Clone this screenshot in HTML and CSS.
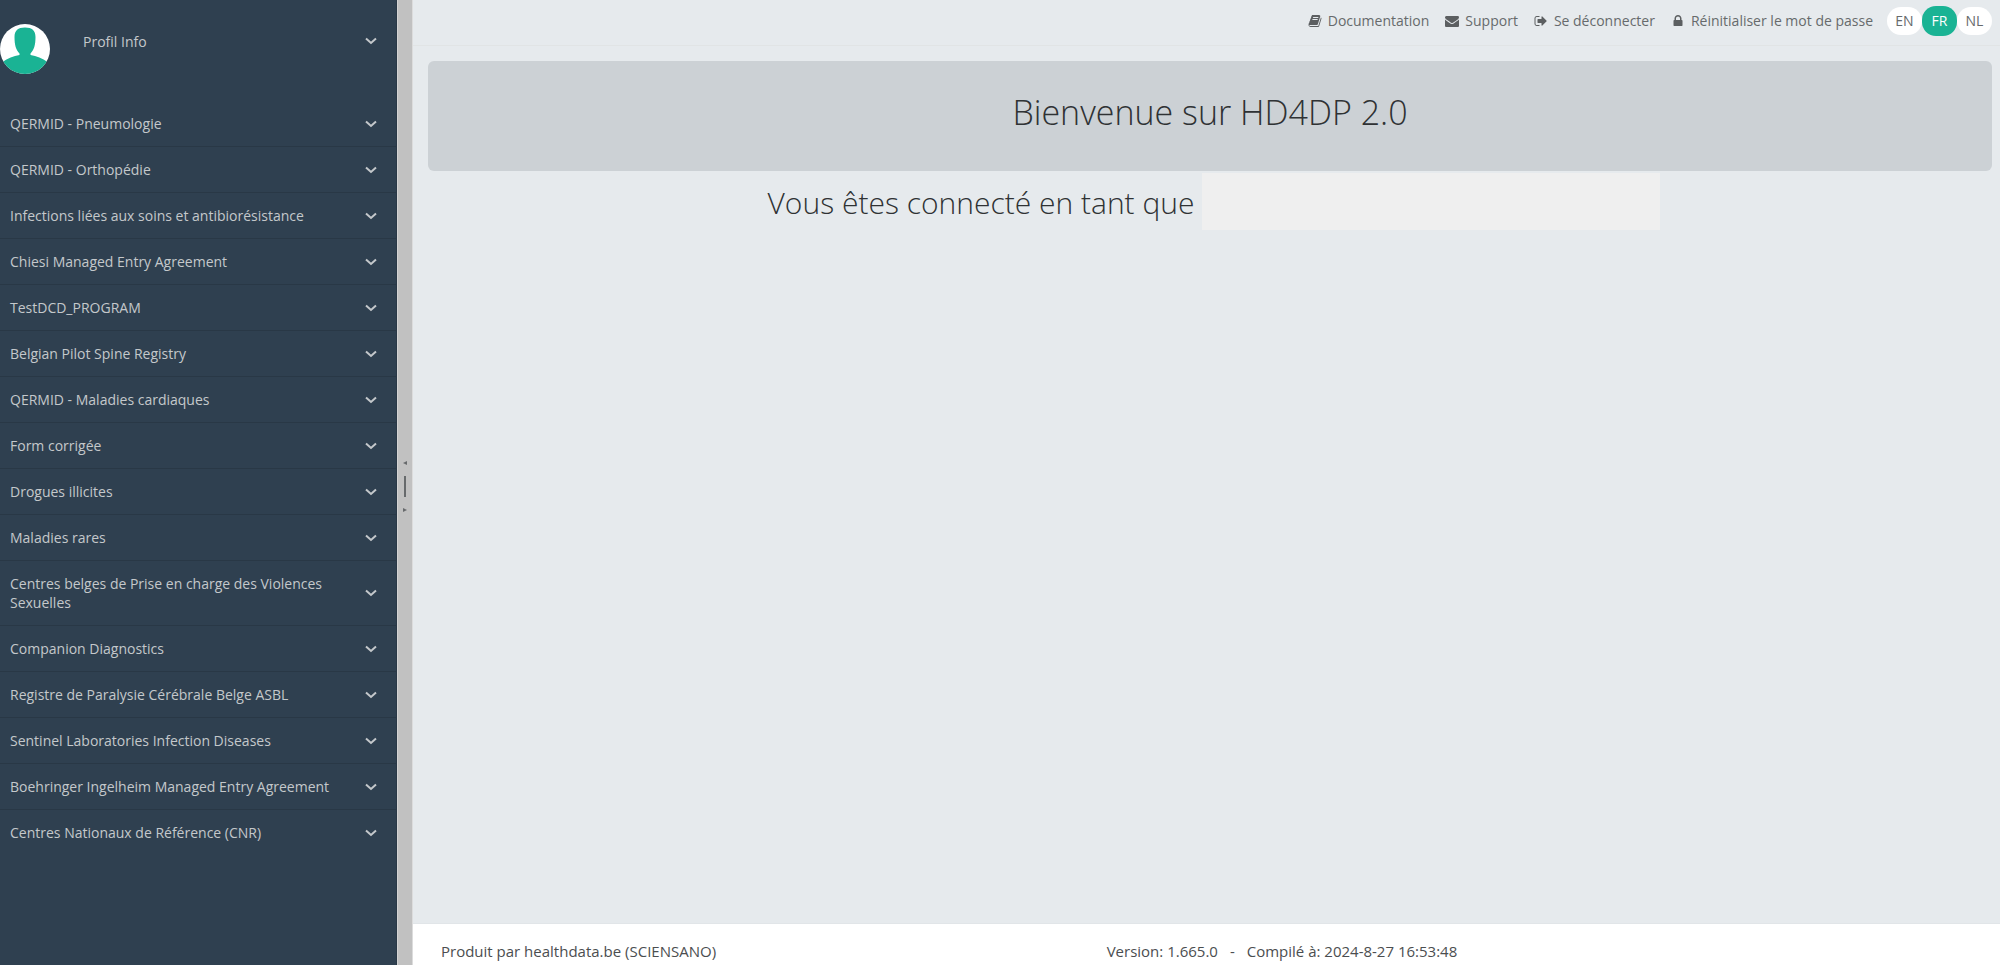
FILE: index.html
```
<!DOCTYPE html>
<html lang="fr">
<head>
  <meta charset="UTF-8">
  <title>HD4DP 2.0</title>
  <link rel="stylesheet" href="styles.css">
</head>
<body>
  <svg class="sprite" aria-hidden="true">
    <symbol id="chevron" viewBox="0 0 12 8">
      <path d="M1 1.5 L6 6 L11 1.5" fill="none" stroke="currentColor" stroke-width="2"/>
    </symbol>
  </svg>
  <div class="wrapper">
    <nav class="sidebar">
      <button class="profile" type="button">
        <svg class="avatar" viewBox="0 0 50 50">
          <defs><clipPath id="round"><circle cx="25" cy="25" r="25"/></clipPath></defs>
          <circle cx="25" cy="25" r="25" fill="#fff"/>
          <path clip-path="url(#round)" fill="#1ab394" d="M25 3.500c7 0 10.500 3 10.500 9.500 0 8-1.500 13-5 16.500v1.500c6 1 12 3.500 17 7v12h-45v-12c5-3.500 11-6 17-7v-1.500c-3.500-3.500-5-8.500-5-16.500 0-6.500 3.500-9.500 10.500-9.500z"/>
        </svg>
        <span class="label">Profil Info</span>
        <svg class="chevron"><use href="#chevron"/></svg>
      </button>
      <ul class="menu">
        <li><button type="button"><span class="label">QERMID - Pneumologie</span><svg class="chevron"><use href="#chevron"/></svg></button></li>
        <li><button type="button"><span class="label">QERMID - Orthopédie</span><svg class="chevron"><use href="#chevron"/></svg></button></li>
        <li><button type="button"><span class="label">Infections liées aux soins et antibiorésistance</span><svg class="chevron"><use href="#chevron"/></svg></button></li>
        <li><button type="button"><span class="label">Chiesi Managed Entry Agreement</span><svg class="chevron"><use href="#chevron"/></svg></button></li>
        <li><button type="button"><span class="label">TestDCD_PROGRAM</span><svg class="chevron"><use href="#chevron"/></svg></button></li>
        <li><button type="button"><span class="label">Belgian Pilot Spine Registry</span><svg class="chevron"><use href="#chevron"/></svg></button></li>
        <li><button type="button"><span class="label">QERMID - Maladies cardiaques</span><svg class="chevron"><use href="#chevron"/></svg></button></li>
        <li><button type="button"><span class="label">Form corrigée</span><svg class="chevron"><use href="#chevron"/></svg></button></li>
        <li><button type="button"><span class="label">Drogues illicites</span><svg class="chevron"><use href="#chevron"/></svg></button></li>
        <li><button type="button"><span class="label">Maladies rares</span><svg class="chevron"><use href="#chevron"/></svg></button></li>
        <li><button type="button"><span class="label">Centres belges de Prise en charge des Violences Sexuelles</span><svg class="chevron"><use href="#chevron"/></svg></button></li>
        <li><button type="button"><span class="label">Companion Diagnostics</span><svg class="chevron"><use href="#chevron"/></svg></button></li>
        <li><button type="button"><span class="label">Registre de Paralysie Cérébrale Belge ASBL</span><svg class="chevron"><use href="#chevron"/></svg></button></li>
        <li><button type="button"><span class="label">Sentinel Laboratories Infection Diseases</span><svg class="chevron"><use href="#chevron"/></svg></button></li>
        <li><button type="button"><span class="label">Boehringer Ingelheim Managed Entry Agreement</span><svg class="chevron"><use href="#chevron"/></svg></button></li>
        <li><button type="button"><span class="label">Centres Nationaux de Référence (CNR)</span><svg class="chevron"><use href="#chevron"/></svg></button></li>
      </ul>
    </nav>

    <div class="splitter">
      <svg class="arrow" viewBox="0 0 4 4"><path d="M4 0v4L0 2z"/></svg>
      <div class="handle"></div>
      <svg class="arrow" viewBox="0 0 4 4"><path d="M0 0v4L4 2z"/></svg>
    </div>

    <div class="page">
      <header class="topbar">
        <nav class="links">
          <a href="#">
            <svg class="icon" viewBox="0 0 1792 1792"><path d="M1703 478q40 57 18 129l-275 906q-19 64-76.500 107.500t-122.500 43.500h-923q-77 0-148.500-53.500t-99.500-131.500q-24-67-2-127 0-4 3-27t4-37q1-8-3-21.500t-3-19.500q2-11 8-21t16.500-23.500 16.500-23.500q23-38 45-91.500t30-91.500q3-10 .5-30t-.5-28q3-11 17-28t17-23q21-36 42-92t25-90q1-9-2.500-32t.5-28q4-13 22-30.500t22-22.500q19-26 42.500-84.500t27.500-96.500q1-8-3-25.500t-2-26.500q2-8 9-18t18-23 17-21q8-12 16.500-30.500t15-35 16-36 19.500-32 26.500-23.500 36-11.500 47.500 5.500l-1 3q38-9 51-9h761q74 0 114 56t18 130l-274 906q-36 119-71.500 153.500t-128.500 34.500h-869q-27 0-38 15-11 16-1 43 24 70 144 70h923q29 0 56-15.500t35-41.500l300-987q7-22 5-57 38 15 59 43zm-1064 2q-4 13 2 22.500t20 9.500h608q13 0 25.500-9.500t16.500-22.500l21-64q4-13-2-22.500t-20-9.500h-608q-13 0-25.500 9.500t-16.500 22.500zm-83 256q-4 13 2 22.500t20 9.500h608q13 0 25.500-9.500t16.500-22.500l21-64q4-13-2-22.500t-20-9.500h-608q-13 0-25.500 9.500t-16.500 22.500z"/></svg>
            Documentation
          </a>
          <a href="#">
            <svg class="icon" viewBox="0 0 1792 1792"><path d="M1792 710v794q0 66-47 113t-113 47h-1472q-66 0-113-47t-47-113v-794q44 49 101 87 362 246 497 345 57 42 92.500 65.500t94.500 48 110 24.500h2q51 0 110-24.500t94.500-48 92.500-65.500q170-123 498-345 57-39 100-87zm0-294q0 79-49 151t-122 123q-376 261-468 325-10 7-42.500 31t-54 38.500-52 32.500-57.500 27-50 9h-2q-23 0-50-9t-57.500-27-52-32.500-54-38.500-42.500-31q-91-64-262-182.500t-205-142.500q-62-42-117-115.500t-55-136.500q0-78 41.500-130t118.500-52h1472q65 0 112.500 47t47.500 113z"/></svg>
            Support
          </a>
          <a href="#">
            <svg class="icon" viewBox="0 0 1792 1792"><path d="M704 1440q0 4 1 20t.5 26.500-3 23.500-10 19.500-20.500 6.500h-320q-119 0-203.500-84.500t-84.500-203.500v-704q0-119 84.500-203.500t203.500-84.500h320q13 0 22.500 9.500t9.500 22.500q0 4 1 20t.5 26.500-3 23.500-10 19.500-20.500 6.500h-320q-66 0-113 47t-47 113v704q0 66 47 113t113 47h312l11.500 1 11.500 3 8 5.500 7 9 2 13.500zm928-544q0 26-19 45l-544 544q-19 19-45 19t-45-19-19-45v-288h-448q-26 0-45-19t-19-45v-384q0-26 19-45t45-19h448v-288q0-26 19-45t45-19 45 19l544 544q19 19 19 45z"/></svg>
            Se déconnecter
          </a>
          <a href="#">
            <svg class="icon" viewBox="0 0 1792 1792"><path d="M640 768h512v-192q0-106-75-181t-181-75-181 75-75 181v192zm832 96v576q0 40-28 68t-68 28h-960q-40 0-68-28t-28-68v-576q0-40 28-68t68-28h32v-192q0-184 132-316t316-132 316 132 132 316v192h32q40 0 68 28t28 68z"/></svg>
            Réinitialiser le mot de passe
          </a>
        </nav>
        <div class="languages">
          <button type="button">EN</button>
          <button type="button" class="active">FR</button>
          <button type="button">NL</button>
        </div>
      </header>

      <main class="content">
        <div class="jumbotron">
          <h1>Bienvenue sur HD4DP 2.0</h1>
        </div>
        <div class="connected">
          <h2>Vous êtes connecté en tant que</h2>
          <div class="user"></div>
        </div>
      </main>

      <footer class="footer">
        <div>Produit par healthdata.be (SCIENSANO)</div>
        <div class="version">
          <span>Version: 1.665.0</span>
          <span>-</span>
          <span>Compilé à: 2024-8-27 16:53:48</span>
        </div>
      </footer>
    </div>
  </div>
</body>
</html>
```

FILE: styles.css
```
* {
  box-sizing: border-box;
}
body {
  margin: 0;
  font-family: "Open Sans", "Liberation Sans", sans-serif;
  font-size: 14px;
  line-height: 19px;
  color: #676a6c;
  background: #e6eaed;
}
button {
  font: inherit;
  border: none;
  cursor: pointer;
}
.sprite {
  display: none;
}
.wrapper {
  display: flex;
  min-height: 100vh;
}

/* sidebar */
.sidebar {
  flex: 0 0 397px;
  background: #2f4050;
  border-right: 1px solid #293846;
  color: #c4c8cb;
}
.sidebar button {
  display: flex;
  width: 100%;
  color: inherit;
  background: none;
  text-align: left;
}
.label {
  flex: 1;
}
.chevron {
  width: 12px;
  height: 8px;
}
.profile {
  height: 101px;
  padding: 24px 19px 0 0;
}
.profile .label {
  padding: 8px 0 0 33px;
}
.profile .chevron {
  margin-top: 13px;
}
.avatar {
  width: 50px;
  height: 50px;
}
.menu {
  margin: 0;
  padding: 0;
  list-style: none;
}
.menu li {
  border-bottom: 1px solid #293846;
}
.menu li:last-child {
  border-bottom: none;
}
.menu button {
  align-items: center;
  gap: 24px;
  padding: 13px 19px 13px 10px;
}

/* splitter */
.splitter {
  flex: 0 0 16px;
  display: flex;
  flex-direction: column;
  align-items: center;
  justify-content: center;
  gap: 11px;
  padding-top: 8px;
  background: #c1c1c1;
  border-left: 1px solid #d3d3d3;
  border-right: 1px solid #dcdcdc;
  cursor: col-resize;
}
.arrow {
  width: 4px;
  height: 4px;
  fill: #676a6c;
}
.handle {
  width: 2px;
  height: 21px;
  background: #676a6c;
}

/* page */
.page {
  flex: 1;
  display: flex;
  flex-direction: column;
}
.topbar {
  display: flex;
  align-items: center;
  justify-content: flex-end;
  gap: 14px;
  height: 46px;
  padding: 0 8px 4px;
  border-bottom: 1px solid #e1e4e5;
}
.links {
  display: flex;
  gap: 16px;
}
.links a {
  display: flex;
  align-items: center;
  gap: 6px;
  color: #676a6c;
  text-decoration: none;
}
.icon {
  width: 14px;
  height: 14px;
  fill: #5c5f61;
}
.languages {
  display: flex;
  align-items: center;
}
.languages button {
  width: 35px;
  height: 28px;
  padding: 0;
  border-radius: 14px;
  color: #676a6c;
  background: #fff;
}
.languages .active {
  height: 30px;
  color: #fff;
  background: #1ab394;
}
.content {
  flex: 1;
  padding: 15px 8px 0 15px;
}
h1,
h2 {
  margin: 0;
  font-weight: 300;
  color: #2f3234;
}
.jumbotron {
  padding: 31px 0 39px;
  text-align: center;
  background: #ccd1d5;
  border-radius: 6px;
}
h1 {
  font-size: 34px;
  line-height: 40px;
}
.connected {
  display: flex;
  align-items: center;
  justify-content: center;
  gap: 8px;
  padding: 2px 0 0 8px;
}
h2 {
  padding-top: 2px;
  font-size: 30px;
  line-height: 36px;
}
.user {
  width: 458px;
  height: 57px;
  background: #efefef;
}

/* footer */
.footer {
  display: grid;
  grid-template-columns: 10fr 13fr;
  padding: 18px 28px 4px;
  font-size: 15px;
  color: #4b4e50;
  background: #fff;
  border-top: 1px solid #e1e5e8;
}
.version {
  display: flex;
  gap: 12px;
}
```
